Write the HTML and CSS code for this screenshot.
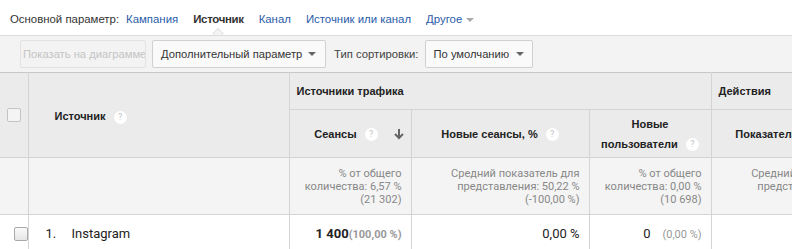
FILE: index.html
```html
<!DOCTYPE html>
<html lang="ru">
<head>
    <meta charset="UTF-8">
    <title>Источники трафика</title>
    <link rel="stylesheet" href="styles.css">
</head>
<body>
    <div class="dims">
        <span class="dims-label">Основной параметр:</span>
        <a class="dim">Кампания</a>
        <span class="dim active">Источник</span>
        <a class="dim">Канал</a>
        <a class="dim">Источник или канал</a>
        <a class="dim">Другое <span class="caret light"></span></a>
    </div>

    <div class="toolbar">
        <button class="btn disabled">Показать на диаграмме</button>
        <button class="btn select wide">Дополнительный параметр <span class="caret"></span></button>
        <span class="sort-label">Тип сортировки:</span>
        <button class="btn select">По умолчанию <span class="caret"></span></button>
    </div>

    <table class="report">
        <colgroup>
            <col style="width: 28px">
            <col style="width: 261px">
            <col style="width: 122px">
            <col style="width: 178px">
            <col style="width: 122px">
            <col style="width: 178px">
        </colgroup>
        <tr class="group-row">
            <th rowspan="2" class="check-cell"><span class="checkbox"></span></th>
            <th rowspan="2" class="dim-head">Источник <span class="help">?</span></th>
            <th colspan="3" class="group">Источники трафика</th>
            <th class="group">Действия</th>
        </tr>
        <tr class="metric-row">
            <th>
                <div class="sorted">
                    <span class="label">Сеансы <span class="help">?</span></span>
                    <svg class="arrow" width="10" height="12" viewBox="0 0 10 12"><path d="M5 1v9M1 6l4 4 4-4" fill="none" stroke="#666" stroke-width="2"/></svg>
                </div>
            </th>
            <th>Новые сеансы, % <span class="help">?</span></th>
            <th>Новые<br>пользователи <span class="help">?</span></th>
            <th>Показатель отказов <span class="help">?</span></th>
        </tr>
        <tr class="totals">
            <td></td>
            <td></td>
            <td>% от общего<br>количества: 6,57 %<br>(21 302)</td>
            <td>Средний показатель для<br>представления: 50,22 %<br>(-100,00 %)</td>
            <td>% от общего<br>количества: 0,00 %<br>(10 698)</td>
            <td>Средний показатель для<br>представления: 48,73 %<br>(-100,00 %)</td>
        </tr>
        <tr class="data">
            <td class="check-cell"><span class="checkbox"></span></td>
            <td class="name"><span class="num">1.</span>Instagram</td>
            <td><b>1 400</b><span class="share">(100,00 %)</span></td>
            <td>0,00 %</td>
            <td>0<span class="share light">(0,00 %)</span></td>
            <td>0,00 %</td>
        </tr>
    </table>
</body>
</html>
```

FILE: styles.css
```css
body {
    margin: 0;
    font-family: Roboto, 'Liberation Sans', sans-serif;
    color: #333;
    background: #fff;
    overflow: hidden;
    width: 792px;
}
.dims {
    display: flex;
    align-items: center;
    height: 35px;
    padding: 0 10px;
    padding-top: 3px;
    box-sizing: border-box;
    font-family: 'Liberation Sans', Arial, sans-serif;
    font-size: 11.4px;
}
.dims-label {
    color: #333;
    margin-right: 7px;
}
.dim {
    color: #2a5caa;
    margin-right: 15px;
    position: relative;
}
.dim.active {
    color: #333;
    font-weight: bold;
    letter-spacing: -0.3px;
}
/* little pointer under the active dimension */
.dim.active::before,
.dim.active::after {
    content: "";
    position: absolute;
    left: 19px;
    border: 6px solid transparent;
    border-top: 0;
}
.dim.active::before {
    top: 15px;
    border-bottom-color: #d8d8d8;
}
.dim.active::after {
    top: 16px;
    border-bottom-color: #f3f3f3;
}
.caret {
    display: inline-block;
    width: 0;
    height: 0;
    border-left: 4px solid transparent;
    border-right: 4px solid transparent;
    border-top: 4px solid #666;
    vertical-align: middle;
    margin-left: 4px;
}
.caret.light {
    border-top-color: #aaa;
    margin-left: 1px;
}
.toolbar {
    display: flex;
    align-items: center;
    height: 37px;
    box-sizing: border-box;
    padding: 0 20px;
    background: #f3f3f3;
    border-top: 1px solid #dcdcdc;
}
.btn {
    height: 28px;
    box-sizing: border-box;
    border: 1px solid #d0d0d0;
    border-radius: 2px;
    background: #fafafa;
    font-family: 'Liberation Sans', Arial, sans-serif;
    font-size: 11.2px;
    color: #333;
    padding: 0 8px;
    margin-right: 6px;
    white-space: nowrap;
    overflow: hidden;
}
.btn.disabled {
    width: 126px;
    padding: 0 2px;
    color: #c4c4c4;
    background: #f3f3f3;
    border-color: #e2e2e2;
    text-align: left;
}
.btn.select {
    display: flex;
    align-items: center;
    justify-content: space-between;
    width: 108px;
}
.btn.select.wide {
    width: 174px;
    padding-right: 9px;
}
.sort-label {
    font-family: 'Liberation Sans', Arial, sans-serif;
    font-size: 11.3px;
    color: #444;
    margin: 0 6px 0 2px;
}
.report {
    border-collapse: collapse;
    table-layout: fixed;
    width: 889px;
    font-size: 11px;
}
.report th,
.report td {
    border: 1px solid #d4d4d4;
    padding: 0 9px;
}
.report th {
    background: #ebebeb;
    font-family: 'Liberation Sans', Arial, sans-serif;
    font-weight: bold;
    color: #222;
    font-size: 11px;
}
.report tr:first-child th {
    border-top-color: #c8c8c8;
}
.check-cell {
    padding: 0 !important;
    text-align: center;
}
.report th:first-child,
.report td:first-child {
    border-left: 0;
}
.checkbox {
    display: inline-block;
    width: 12px;
    height: 12px;
    border: 1px solid #c4c4c4;
    border-radius: 2px;
    background: #f4f4f4;
    vertical-align: middle;
}
.data .checkbox {
    background: linear-gradient(#fafafa, #e6e6e6);
    border-color: #aaa;
}
.dim-head {
    text-align: left;
    padding-left: 26px !important;
    padding-top: 4px !important;
}
.help {
    display: inline-block;
    width: 13px;
    height: 13px;
    line-height: 13px;
    border-radius: 50%;
    background: #fff;
    color: #c4c4c4;
    font-family: Roboto, sans-serif;
    font-weight: normal;
    font-size: 9px;
    text-align: center;
    margin-left: 5px;
    vertical-align: middle;
}
.group-row th {
    height: 36px;
}
.group {
    text-align: left;
    padding-left: 7px !important;
}
.metric-row th {
    height: 47px;
    text-align: center;
    line-height: 20px;
}
.sorted {
    display: flex;
    align-items: center;
}
.sorted .label {
    flex: 1;
    text-align: center;
}
.arrow {
    margin-right: -2px;
}
.totals td {
    background: #f4f4f4;
    height: 56px;
    color: #888;
    text-align: right;
    line-height: 13px;
    font-size: 11px;
}
.data td {
    height: 36px;
    padding-top: 0;
    font-size: 13px;
    color: #222;
    text-align: right;
}
.data td.name {
    text-align: left;
    padding-left: 17px;
}
.num {
    display: inline-block;
    width: 26px;
}
.share {
    font-size: 11px;
    font-weight: bold;
    color: #999;
}
.share.light {
    font-weight: normal;
    margin-left: 12px;
}
```
